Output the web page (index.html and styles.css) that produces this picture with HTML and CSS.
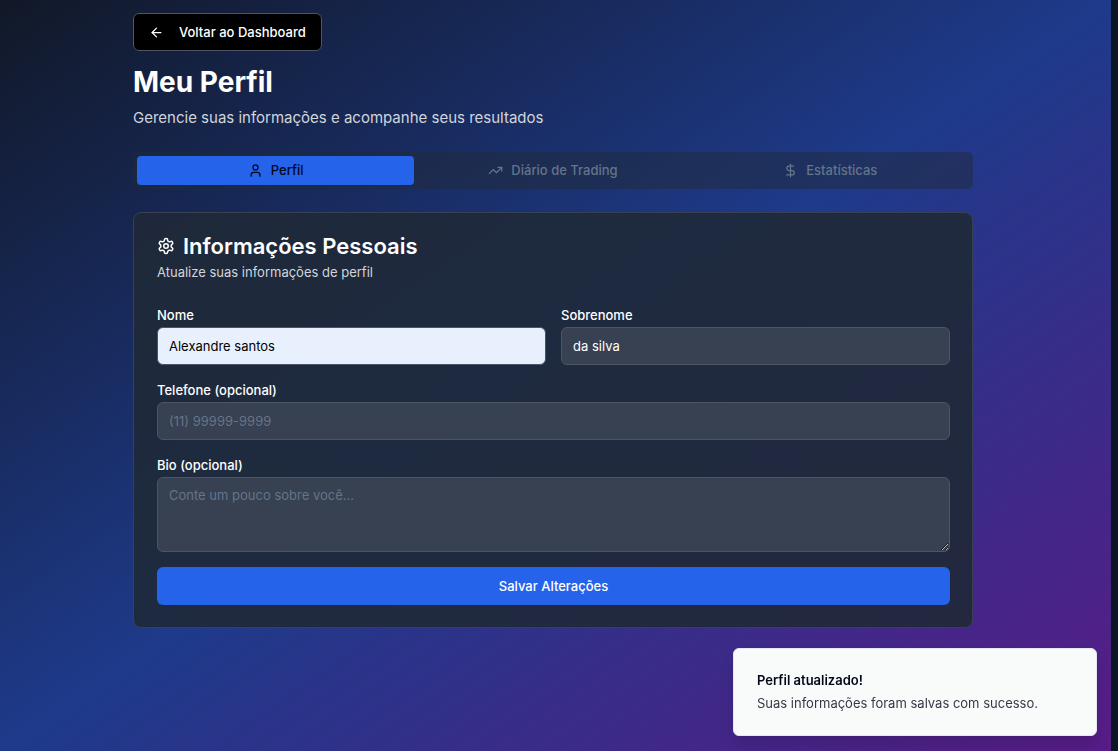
FILE: index.html
```html
<!DOCTYPE html>
<html lang="pt-BR">
<head>
<meta charset="utf-8">
<meta name="viewport" content="width=device-width, initial-scale=1">
<title>Meu Perfil</title>
<link rel="stylesheet" href="styles.css">
</head>
<body>
<main class="page">
  <header class="header">
    <button class="back" type="button">
      <svg class="icon" viewBox="0 0 24 24"><path d="m12 19-7-7 7-7"/><path d="M19 12H5"/></svg>
      Voltar ao Dashboard
    </button>
    <h1 class="title">Meu Perfil</h1>
    <p class="subtitle">Gerencie suas informações e acompanhe seus resultados</p>
  </header>

  <div class="tabs" role="tablist">
    <button class="tab tab-active" type="button" role="tab" aria-selected="true">
      <svg class="icon" viewBox="0 0 24 24"><path d="M19 21v-2a4 4 0 0 0-4-4H9a4 4 0 0 0-4 4v2"/><circle cx="12" cy="7" r="4"/></svg>
      Perfil
    </button>
    <button class="tab" type="button" role="tab" aria-selected="false">
      <svg class="icon" viewBox="0 0 24 24"><path d="m22 7-8.5 8.5-5-5L2 17"/><path d="M16 7h6v6"/></svg>
      Diário de Trading
    </button>
    <button class="tab" type="button" role="tab" aria-selected="false">
      <svg class="icon" viewBox="0 0 24 24"><path d="M12 2v20"/><path d="M17 5H9.500a3.500 3.500 0 0 0 0 7h5a3.500 3.500 0 0 1 0 7H6"/></svg>
      Estatísticas
    </button>
  </div>

  <section class="card">
    <h2 class="card-title">
      <svg class="icon icon-large" viewBox="0 0 24 24"><path d="M12.220 2h-.44a2 2 0 0 0-2 2v.18a2 2 0 0 1-1 1.730l-.43.25a2 2 0 0 1-2 0l-.15-.08a2 2 0 0 0-2.730.73l-.22.38a2 2 0 0 0 .73 2.730l.15.1a2 2 0 0 1 1 1.720v.51a2 2 0 0 1-1 1.740l-.15.09a2 2 0 0 0-.73 2.730l.22.38a2 2 0 0 0 2.730.73l.15-.08a2 2 0 0 1 2 0l.43.25a2 2 0 0 1 1 1.730V20a2 2 0 0 0 2 2h.44a2 2 0 0 0 2-2v-.18a2 2 0 0 1 1-1.730l.43-.25a2 2 0 0 1 2 0l.15.08a2 2 0 0 0 2.730-.73l.22-.39a2 2 0 0 0-.73-2.730l-.15-.08a2 2 0 0 1-1-1.740v-.5a2 2 0 0 1 1-1.740l.15-.09a2 2 0 0 0 .73-2.730l-.22-.38a2 2 0 0 0-2.730-.73l-.15.08a2 2 0 0 1-2 0l-.43-.25a2 2 0 0 1-1-1.730V4a2 2 0 0 0-2-2z"/><circle cx="12" cy="12" r="3"/></svg>
      Informações Pessoais
    </h2>
    <p class="card-text">Atualize suas informações de perfil</p>
    <form class="form">
      <div class="row">
        <div class="field">
          <label class="label" for="nome">Nome</label>
          <input class="input input-filled" id="nome" type="text" value="Alexandre santos">
        </div>
        <div class="field">
          <label class="label" for="sobrenome">Sobrenome</label>
          <input class="input" id="sobrenome" type="text" value="da silva">
        </div>
      </div>
      <div class="field">
        <label class="label" for="telefone">Telefone (opcional)</label>
        <input class="input" id="telefone" type="tel" placeholder="(11) 99999-9999">
      </div>
      <div class="field">
        <label class="label" for="bio">Bio (opcional)</label>
        <textarea class="input textarea" id="bio" placeholder="Conte um pouco sobre você..."></textarea>
      </div>
      <button class="save" type="button">Salvar Alterações</button>
    </form>
  </section>
</main>

<aside class="toast" role="status">
  <strong class="toast-title">Perfil atualizado!</strong>
  <p class="toast-text">Suas informações foram salvas com sucesso.</p>
</aside>
</body>
</html>
```

FILE: styles.css
```css
* { box-sizing: border-box; margin: 0; }

body {
  min-height: 100vh;
  padding-right: 7px;
  background: #0d1624;
  font-family: Inter, "Liberation Sans", sans-serif;
  font-size: 13px;
  line-height: 19px;
  color: #fff;
}

button, input, textarea { font: inherit; }

.page {
  min-height: 100vh;
  padding: 13px 138px 24px 133px;
  background: linear-gradient(to bottom right, #111827, #1e3a8a, #581c87);
}

.icon {
  flex: none;
  width: 15px;
  height: 15px;
  fill: none;
  stroke: currentColor;
  stroke-width: 2;
  stroke-linecap: round;
  stroke-linejoin: round;
}

.icon-large { width: 18px; height: 18px; }

.header { margin-bottom: 23px; }

.back {
  display: flex;
  align-items: center;
  gap: 15px;
  height: 38px;
  padding: 0 15px;
  border: 1px solid #4b5563;
  border-radius: 6px;
  background: #000;
  color: #fff;
  font-weight: 500;
}

.title {
  margin-top: 14px;
  font-size: 28px;
  line-height: 34px;
  font-weight: 700;
}

.subtitle {
  margin-top: 8px;
  font-size: 15px;
  line-height: 22px;
  color: #d1d5db;
}

.tabs {
  display: grid;
  grid-template-columns: repeat(3, 1fr);
  padding: 4px;
  border-radius: 6px;
  background: rgba(31, 41, 55, 0.5);
}

.tab {
  display: flex;
  align-items: center;
  justify-content: center;
  gap: 8px;
  height: 29px;
  padding: 0;
  border: 0;
  border-radius: 4px;
  background: none;
  color: #64748b;
  font-weight: 500;
}

.tab-active { background: #2563eb; color: #020817; }

.card {
  margin-top: 23px;
  padding: 22px 22px 22px 23px;
  border: 1px solid #374151;
  border-radius: 8px;
  background: rgba(31, 41, 55, 0.9);
}

.card-title {
  display: flex;
  align-items: center;
  gap: 8px;
  font-size: 22px;
  line-height: 22px;
  font-weight: 600;
}

.card-text { margin-top: 6px; color: #d1d5db; }

.form { display: grid; gap: 15px; margin-top: 23px; }
.row { display: grid; grid-template-columns: 1fr 1fr; gap: 15px; }
.field { display: grid; gap: 1px; min-width: 0; }
.label { font-weight: 500; line-height: 21px; }

.input {
  width: 100%;
  height: 38px;
  padding: 0 11px;
  border: 1px solid #4b5563;
  border-radius: 6px;
  background: #374151;
  color: #fff;
}

.input::placeholder { color: #64748b; opacity: 1; }
.input-filled { background: #e8f0fe; color: #000; }

.textarea {
  display: block;
  height: 75px;
  padding: 8px 11px;
  resize: vertical;
}

.save {
  height: 38px;
  border: 0;
  border-radius: 6px;
  background: #2563eb;
  color: #fff;
  font-weight: 500;
}

.toast {
  position: fixed;
  right: 21px;
  bottom: 15px;
  width: 364px;
  padding: 22px 23px;
  border: 1px solid #e2e8f0;
  border-radius: 6px;
  background: #f9fbfa;
  color: #020817;
  box-shadow: 0 10px 15px rgba(0, 0, 0, 0.1);
}

.toast-title { display: block; font-weight: 600; }
.toast-text { margin-top: 4px; color: #353945; }
```
